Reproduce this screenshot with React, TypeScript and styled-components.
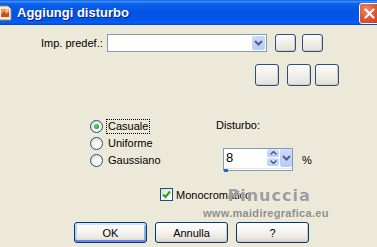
import React from 'react';
import styled, { createGlobalStyle } from 'styled-components';

const GlobalStyle = createGlobalStyle`
  body {
    margin: 0;
    background: #ece9d8;
    font-family: 'Liberation Sans', Arial, sans-serif;
  }
`;

const Window = styled.div`
  position: relative;
  width: 377px;
  height: 247px;
  overflow: hidden;
  display: flex;
  flex-direction: column;
  background: #ece9d8;
  font-size: 11px;
  color: #000;
`;

const TitleBar = styled.div`
  height: 25px;
  flex: none;
  display: flex;
  align-items: center;
  background: linear-gradient(
    180deg,
    #0a5ee4 0%,
    #3d8ef7 6%,
    #0a5fea 16%,
    #0054e3 50%,
    #0056ea 80%,
    #0860f0 90%,
    #0046d0 100%
  );
`;

const TitleIcon = styled.svg`
  flex: none;
  margin-left: -3px;
  margin-top: 1px;
`;

const TitleText = styled.span`
  margin-left: 4px;
  font-weight: bold;
  font-size: 13px;
  color: #fff;
  text-shadow: 1px 1px 0 #0a1c8a;
`;

const CloseButton = styled.div`
  margin-left: auto;
  margin-right: -3px;
  margin-top: 1px;
  width: 21px;
  height: 21px;
  box-sizing: border-box;
  border: 1px solid #fff;
  border-radius: 3px;
  background: radial-gradient(circle at 35% 30%, #f08a6c 0%, #e05a35 45%, #c63e18 100%);
  display: flex;
  align-items: center;
  justify-content: center;
`;

const Body = styled.div`
  display: flex;
  flex-direction: column;
`;

const PresetRow = styled.div`
  display: flex;
  align-items: center;
  height: 18px;
  margin-top: 9px;
  padding-left: 41px;
`;

const Label = styled.span`
  width: 66px;
  white-space: nowrap;
`;

const Combo = styled.div`
  width: 160px;
  height: 18px;
  box-sizing: border-box;
  border: 1px solid #7f9db9;
  background: #fff;
  display: flex;
  justify-content: flex-end;
  padding: 1px;
`;

const ComboArrow = styled.div`
  width: 13px;
  height: 14px;
  border-radius: 2px;
  background: linear-gradient(180deg, #cbd9fd 0%, #b9cbf8 100%);
  display: flex;
  align-items: center;
  justify-content: center;
`;

const ToolButton = styled.div<{ $w: number; $h: number; $gap: number }>`
  width: ${p => p.$w}px;
  height: ${p => p.$h}px;
  margin-left: ${p => p.$gap}px;
  box-sizing: border-box;
  border: 1px solid #2d4f7f;
  border-radius: 3px;
  background: linear-gradient(180deg, #fbfbf9 0%, #f1efe8 50%, #e4e1d6 100%);
  box-shadow: inset -1px -1px 0 #d2cdbf;
`;

const ToolRow = styled.div`
  display: flex;
  height: 22px;
  margin-top: 12px;
  padding-left: 255px;
`;

const OptionsArea = styled.div`
  display: flex;
  margin-top: 32px;
  padding-left: 90px;
`;

const RadioList = styled.div`
  width: 126px;
  display: flex;
  flex-direction: column;
`;

const RadioRow = styled.div`
  height: 17px;
  display: flex;
  align-items: center;
`;

const RadioCircle = styled.div<{ $checked?: boolean }>`
  width: 13px;
  height: 13px;
  box-sizing: border-box;
  border: 1px solid #1c5180;
  border-radius: 50%;
  background: radial-gradient(circle at 65% 65%, #ffffff 0%, #f3f2ec 45%, #d6d2c4 100%);
  display: flex;
  align-items: center;
  justify-content: center;
  &::after {
    content: '';
    display: ${p => (p.$checked ? 'block' : 'none')};
    width: 5px;
    height: 5px;
    border-radius: 50%;
    background: radial-gradient(circle at 40% 40%, #5ee05e 0%, #21a121 70%);
  }
`;

const RadioText = styled.span<{ $focused?: boolean }>`
  margin-left: 3px;
  padding: 0 1px;
  line-height: 13px;
  border: 1px dotted ${p => (p.$focused ? '#000' : 'transparent')};
`;

const NoisePanel = styled.div`
  display: flex;
  flex-direction: column;
`;

const NoiseLabel = styled.div`
  height: 14px;
  line-height: 14px;
`;

const SpinRow = styled.div`
  display: flex;
  align-items: center;
  margin-top: 16px;
  margin-left: 7px;
`;

const SpinBox = styled.div`
  width: 70px;
  height: 23px;
  box-sizing: border-box;
  border: 1px solid #7f9db9;
  background: #fff;
  display: flex;
  flex-direction: column;
`;

const SpinTop = styled.div`
  display: flex;
  height: 18px;
`;

const SpinValue = styled.span`
  flex: 1;
  padding-left: 2px;
  font-size: 13px;
  line-height: 18px;
`;

const SpinArrows = styled.div`
  width: 12px;
  display: flex;
  flex-direction: column;
`;

const SpinHalf = styled.div`
  flex: 1;
  background: linear-gradient(180deg, #d2defc 0%, #bccdf8 100%);
  border-radius: 2px;
  display: flex;
  align-items: center;
  justify-content: center;
  margin: 0 0 1px 0;
`;

const SpinDrop = styled.div`
  width: 12px;
  margin-left: 1px;
  background: linear-gradient(180deg, #cbd9fd 0%, #b9cbf8 100%);
  border-radius: 2px;
  display: flex;
  align-items: center;
  justify-content: center;
`;

const SpinTrack = styled.div`
  margin-top: 1px;
  height: 2px;
  border-top: 1px solid #eae6dc;
  display: flex;
`;

const SpinLevel = styled.div`
  width: 4px;
  height: 3px;
  background: #2a63d4;
`;

const Percent = styled.span`
  margin-left: 9px;
`;

const CheckRow = styled.div`
  display: flex;
  align-items: center;
  height: 13px;
  margin-top: 17px;
  padding-left: 160px;
`;

const CheckBox = styled.div`
  width: 13px;
  height: 13px;
  box-sizing: border-box;
  border: 1px solid #1c5180;
  background: linear-gradient(135deg, #dcd9cd 0%, #f6f5f1 60%, #ffffff 100%);
  display: flex;
  align-items: center;
  justify-content: center;
`;

const CheckText = styled.span`
  margin-left: 3px;
`;

const ButtonRow = styled.div`
  display: flex;
  margin-top: 21px;
  padding-left: 74px;
  gap: 8px;
`;

const PushButton = styled.div<{ $default?: boolean }>`
  width: 73px;
  height: 21px;
  box-sizing: border-box;
  border: 1px solid #003c74;
  border-radius: 3px;
  background: linear-gradient(180deg, #ffffff 0%, #f5f4ef 45%, #ebe9e2 75%, #d8d3c7 100%);
  display: flex;
  align-items: center;
  justify-content: center;
  box-shadow: ${p =>
    p.$default
      ? 'inset 0 2px 0 #cee7ff, inset 0 -2px 0 #6982ee, inset 2px 0 0 #b8d2f6, inset -2px 0 0 #8cabe8'
      : 'inset -1px -1px 0 #d2cdbf'};
`;

const Watermark = styled.div`
  position: absolute;
  left: 203px;
  top: 186px;
  display: flex;
  flex-direction: column;
  align-items: flex-end;
  pointer-events: none;
`;

const WatermarkName = styled.span`
  margin-right: 18px;
  font-family: 'DejaVu Sans', sans-serif;
  font-weight: bold;
  font-size: 16px;
  letter-spacing: 1px;
  color: rgba(130, 130, 140, 0.8);
  text-shadow: 0 0 1px #fff;
`;

const WatermarkUrl = styled.span`
  margin-top: 2px;
  font-size: 11px;
  font-weight: bold;
  letter-spacing: 0.3px;
  color: rgba(125, 125, 130, 0.85);
`;

const ChevronDown = () => (
  <svg width="9" height="6" viewBox="0 0 9 6">
    <path d="M1 1 L4.5 4.5 L8 1" fill="none" stroke="#4d6185" strokeWidth="2" />
  </svg>
);

const SmallChevron = ({ up }: { up?: boolean }) => (
  <svg width="7" height="4" viewBox="0 0 7 4">
    <path d={up ? 'M0.5 3.5 L3.5 0.5 L6.5 3.5' : 'M0.5 0.5 L3.5 3.5 L6.5 0.5'} fill="none" stroke="#4d6185" strokeWidth="1.5" />
  </svg>
);

const App: React.FC = () => {
  return (
    <>
      <GlobalStyle />
      <Window>
        <TitleBar>
          <TitleIcon width="16" height="16" viewBox="0 0 16 16">
            <path d="M2 1 H11 L14 4 V15 H2 Z" fill="#f4eedc" stroke="#9c8c6c" />
            <rect x="4" y="4" width="8" height="8" fill="#e8a060" />
            <path d="M4 10 L7 6 L9 9 L12 7 V12 H4 Z" fill="#c84a20" />
            <circle cx="10" cy="5.5" r="1" fill="#fff2a0" />
          </TitleIcon>
          <TitleText>Aggiungi disturbo</TitleText>
          <CloseButton>
            <svg width="11" height="11" viewBox="0 0 11 11">
              <path d="M1.5 1.5 L9.5 9.5 M9.5 1.5 L1.5 9.5" stroke="#fff" strokeWidth="2.2" strokeLinecap="round" />
            </svg>
          </CloseButton>
        </TitleBar>

        <Body>
          <PresetRow>
            <Label>Imp. predef.:</Label>
            <Combo>
              <ComboArrow>
                <ChevronDown />
              </ComboArrow>
            </Combo>
            <ToolButton $w={21} $h={18} $gap={8} />
            <ToolButton $w={21} $h={18} $gap={6} />
          </PresetRow>

          <ToolRow>
            <ToolButton $w={24} $h={22} $gap={0} />
            <ToolButton $w={24} $h={22} $gap={8} />
            <ToolButton $w={24} $h={22} $gap={4} />
          </ToolRow>

          <OptionsArea>
            <RadioList>
              <RadioRow>
                <RadioCircle $checked />
                <RadioText $focused>Casuale</RadioText>
              </RadioRow>
              <RadioRow>
                <RadioCircle />
                <RadioText>Uniforme</RadioText>
              </RadioRow>
              <RadioRow>
                <RadioCircle />
                <RadioText>Gaussiano</RadioText>
              </RadioRow>
            </RadioList>

            <NoisePanel>
              <NoiseLabel>Disturbo:</NoiseLabel>
              <SpinRow>
                <SpinBox>
                  <SpinTop>
                    <SpinValue>8</SpinValue>
                    <SpinArrows>
                      <SpinHalf>
                        <SmallChevron up />
                      </SpinHalf>
                      <SpinHalf>
                        <SmallChevron />
                      </SpinHalf>
                    </SpinArrows>
                    <SpinDrop>
                      <ChevronDown />
                    </SpinDrop>
                  </SpinTop>
                  <SpinTrack>
                    <SpinLevel />
                  </SpinTrack>
                </SpinBox>
                <Percent>%</Percent>
              </SpinRow>
            </NoisePanel>
          </OptionsArea>

          <CheckRow>
            <CheckBox>
              <svg width="9" height="9" viewBox="0 0 9 9">
                <path d="M1 4.5 L3.5 7 L8 1.5" fill="none" stroke="#21a121" strokeWidth="2" />
              </svg>
            </CheckBox>
            <CheckText>Monocromatico</CheckText>
          </CheckRow>

          <ButtonRow>
            <PushButton $default>OK</PushButton>
            <PushButton>Annulla</PushButton>
            <PushButton>?</PushButton>
          </ButtonRow>
        </Body>

        <Watermark>
          <WatermarkName>Pinuccia</WatermarkName>
          <WatermarkUrl>www.maidiregrafica.eu</WatermarkUrl>
        </Watermark>
      </Window>
    </>
  );
};

export default App;
